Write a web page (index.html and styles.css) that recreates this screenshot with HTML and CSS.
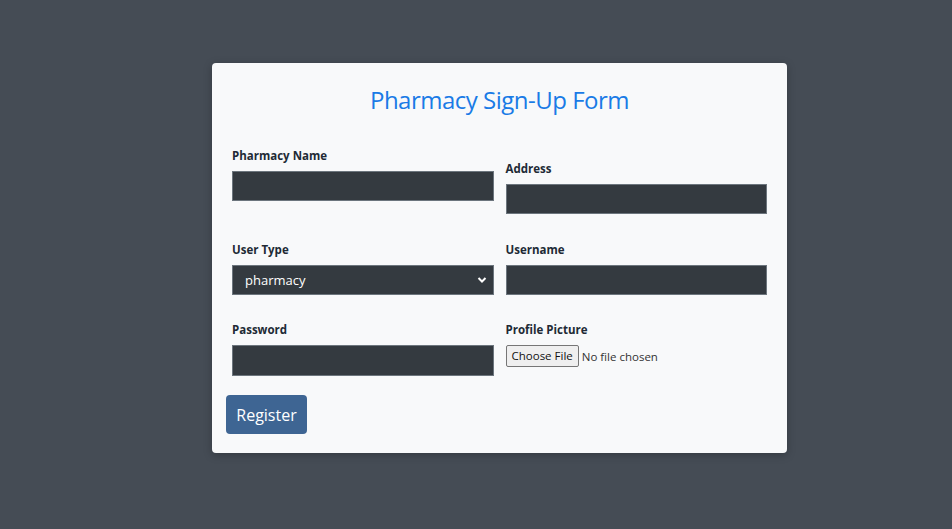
FILE: index.html
```html
<!DOCTYPE html>
<html>
<head>
<meta charset="utf-8">
<link rel="stylesheet" href="styles.css">
</head>
<body>
<div class="page">
  <form class="card">
    <h1 class="title">Pharmacy Sign-Up Form</h1>
    <div class="row">
      <div class="col">
        <label class="lbl">Pharmacy Name</label>
        <input class="field" type="text">
      </div>
      <div class="col col-offset">
        <label class="lbl">Address</label>
        <input class="field" type="text">
      </div>
    </div>
    <div class="row">
      <div class="col">
        <label class="lbl">User Type</label>
        <div class="select">
          <span>pharmacy</span>
          <svg class="chev" width="10" height="8" viewBox="0 0 10 8"><path d="M1.5 2 L5 5.5 L8.5 2" fill="none" stroke="#fff" stroke-width="2"/></svg>
        </div>
      </div>
      <div class="col">
        <label class="lbl">Username</label>
        <input class="field" type="text">
      </div>
    </div>
    <div class="row">
      <div class="col">
        <label class="lbl">Password</label>
        <input class="field" type="password">
      </div>
      <div class="col">
        <label class="lbl">Profile Picture</label>
        <div class="file">
          <span class="file-btn">Choose File</span>
          <span class="file-txt">No file chosen</span>
        </div>
      </div>
    </div>
    <div class="actions">
      <button class="btn" type="button">Register</button>
    </div>
  </form>
</div>
</body>
</html>
```
FILE: styles.css
```css
* { box-sizing: border-box; }
html, body { margin: 0; padding: 0; }
body {
  background: #454c55;
  font-family: "Open Sans", "Liberation Sans", sans-serif;
  color: #212529;
  height: 529px;
}
.page {
  display: flex;
  justify-content: flex-start;
  padding-top: 63px;
  padding-left: 212px;
}
.card {
  width: 575px;
  height: 390px;
  background: #f8f9fa;
  border-radius: 4px;
  box-shadow: 0 2px 8px rgba(0,0,0,0.25);
  padding: 22px 20px 0 20px;
  display: flex;
  flex-direction: column;
}
.title {
  margin: 0;
  text-align: center;
  color: #1a7be6;
  font-weight: 400;
  font-size: 24px;
  line-height: 30px;
  letter-spacing: -0.5px;
}
.row {
  display: flex;
  gap: 12px;
}
.row:nth-of-type(1) { margin-top: 33px; }
.col {
  flex: 1;
  display: flex;
  flex-direction: column;
}
.col-offset { padding-top: 13px; }
.lbl {
  font-size: 11.5px;
  font-weight: 700;
  line-height: 16px;
  color: #212a35;
  margin-bottom: 7px;
}
.field, .select {
  height: 30px;
  background: #343a40;
  border: 1px solid #6c757d;
  border-radius: 0;
  color: #fff;
  width: 100%;
  margin: 0;
}
.row:nth-of-type(1) .field { margin-bottom: 28px; }
.row:nth-of-type(2) .field, .row:nth-of-type(2) .select { margin-bottom: 27px; }
.row:nth-of-type(3) .field { height: 31px; }
.select {
  display: flex;
  align-items: center;
  justify-content: space-between;
  padding: 0 6px 0 12px;
  font-size: 13px;
}
.chev { display: block; }
.file {
  display: flex;
  align-items: center;
  gap: 3px;
  font-size: 11.5px;
}
.file-btn {
  border: 1px solid #767676;
  background: #efefef;
  border-radius: 2px;
  padding: 2px 5px;
  color: #111;
  line-height: 16px;
}
.file-txt { color: #333; }
.actions {
  margin-top: 19px;
  padding-left: 14px;
  margin-left: -20px;
  display: flex;
}
.btn {
  width: 81px;
  height: 39px;
  background: #3e6593;
  color: #fff;
  border: none;
  border-radius: 4px;
  font-family: inherit;
  font-size: 16px;
}
```
